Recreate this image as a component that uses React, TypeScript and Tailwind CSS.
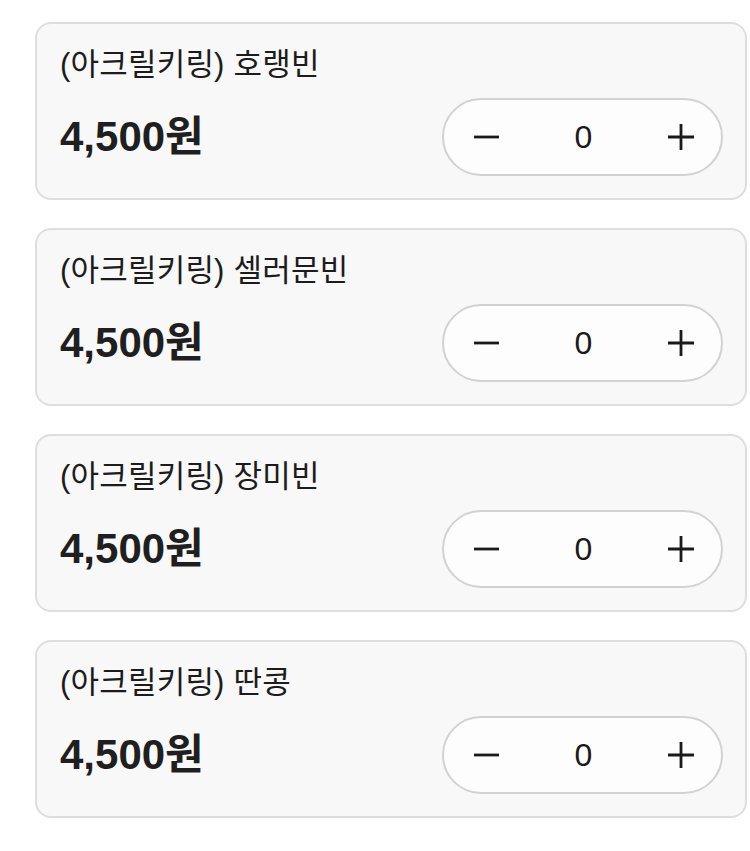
import React from "react";

const items = ["호랭빈", "셀러문빈", "장미빈", "딴콩"];

function Stepper() {
  return (
    <div className="flex h-[78px] w-[281px] items-center justify-between rounded-full border-2 border-[#d2d2d2] bg-[#fdfdfd] pl-[28px] pr-[26px]">
      <svg width="28" height="28" viewBox="0 0 28 28" className="text-[#1a1a1a]">
        <path d="M2 14h25" stroke="currentColor" strokeWidth="2.8" />
      </svg>
      <span className="text-[32px] leading-none text-[#1a1a1a]">0</span>
      <svg width="28" height="28" viewBox="0 0 28 28" className="text-[#1a1a1a]">
        <path d="M1 14h26M14 1v26" stroke="currentColor" strokeWidth="2.8" />
      </svg>
    </div>
  );
}

export default function App() {
  return (
    <div
      className="min-h-[851px] bg-white pl-[35px] pr-[3px] pt-[22px]"
      style={{ fontFamily: '"Liberation Sans", "Noto Sans CJK KR", sans-serif' }}
    >
      <div className="flex flex-col gap-[28px]">
        {items.map((name) => (
          <div
            key={name}
            className="flex h-[178px] flex-col rounded-[16px] border-2 border-[#dedede] bg-[#f8f8f8] pl-[23px] pr-[22px] pt-[24px]"
          >
            <div className="text-[31px] leading-[34px] tracking-[0.2px] text-[#1c1c1c]">
              (아크릴키링) {name}
            </div>
            <div className="mt-[16px] flex items-center justify-between">
              <span className="text-[42px] font-bold leading-none text-[#1f1f1f]">4,500원</span>
              <Stepper />
            </div>
          </div>
        ))}
      </div>
    </div>
  );
}
